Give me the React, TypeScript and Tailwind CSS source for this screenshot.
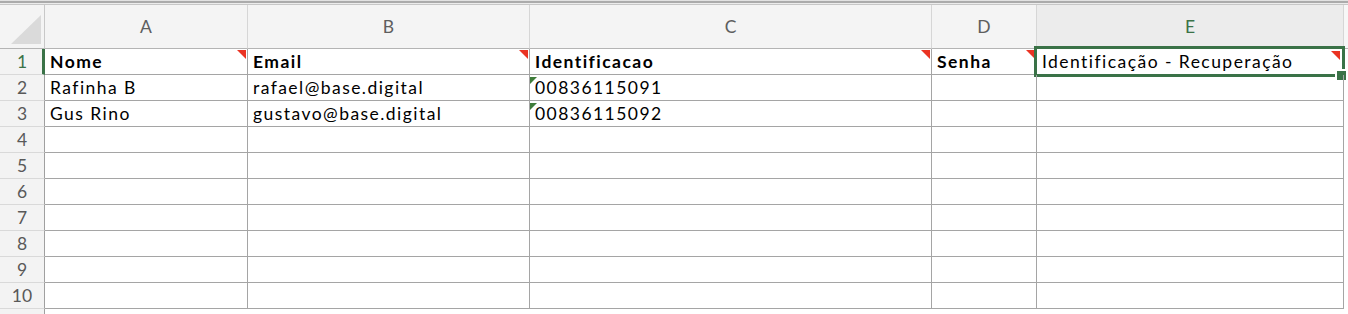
import type { ReactNode } from 'react';

type CellData = {
  text?: string;
  bold?: boolean;
  note?: boolean;
  warn?: boolean;
};

const rows: CellData[][] = [
  [
    { text: 'Nome', bold: true, note: true },
    { text: 'Email', bold: true, note: true },
    { text: 'Identificacao', bold: true, note: true },
    { text: 'Senha', bold: true, note: true },
    { text: 'Identificação - Recuperação', note: true },
  ],
  [{ text: 'Rafinha B' }, { text: 'rafael@base.digital' }, { text: '00836115091', warn: true }, {}, {}],
  [{ text: 'Gus Rino' }, { text: 'gustavo@base.digital' }, { text: '00836115092', warn: true }, {}, {}],
];

const columns = ['A', 'B', 'C', 'D', 'E'];

const RedCorner = ({ inset = 'top-px right-px' }: { inset?: string }) => (
  <svg className={`absolute ${inset} w-[9px] h-[9px]`} viewBox="0 0 9 9">
    <polygon points="0,0 9,0 9,9" fill="#ea3323" />
  </svg>
);

const GreenCorner = () => (
  <svg className="absolute top-[2px] left-0 w-[7px] h-[7px]" viewBox="0 0 7 7">
    <polygon points="0,0 7,0 0,7" fill="#3f7d3a" />
  </svg>
);

const BodyCell = ({ cell, selected }: { cell?: CellData; selected?: boolean }) => (
  <div className="relative h-[26px] border-r border-b border-[#a5a5a5] flex items-center pl-[5px] pt-px whitespace-nowrap text-[17.5px] tracking-[1.45px] leading-none">
    {cell?.warn && <GreenCorner />}
    <span className={cell?.bold ? 'font-bold' : ''}>{cell?.text}</span>
    {selected && (
      <>
        <div className="absolute -left-[3px] -top-[3px] -right-[2px] -bottom-[3px] border-[3px] border-[#3a7247]" />
        <div className="absolute left-[298px] top-[20px] w-[11px] h-[11px] bg-[#3a7247] border-l-2 border-t-2 border-white" />
      </>
    )}
    {cell?.note && <RedCorner inset={selected ? 'top-[2px] right-[3px]' : 'top-px right-px'} />}
  </div>
);

const RowHead = ({ n, active }: { n: number; active?: boolean }) => (
  <div
    className={`h-[26px] border-b border-[#d9d9d9] flex items-center justify-center pt-px bg-[#f3f3f3] text-[17.5px] leading-none ${
      active ? 'border-r-[3px] border-r-[#3a7247] text-[#3a7247] pl-[2px]' : 'border-r border-r-[#a0a0a0] text-[#595959]'
    }`}
  >
    {n}
  </div>
);

const HeadCell = ({ children, active }: { children: ReactNode; active?: boolean }) => (
  <div
    className={`h-[44px] border-r border-b border-r-[#d6d6d6] border-b-[#b4b4b4] flex items-center justify-center pt-[2px] text-[17.5px] ${
      active ? 'bg-[#ececec] text-[#3a7247]' : 'bg-[#f4f4f4] text-[#5e5e5e]'
    }`}
  >
    {children}
  </div>
);

export default function App() {
  return (
    <div className="w-[1348px] h-[314px] overflow-hidden bg-white text-black font-['Lato','Liberation_Sans',sans-serif]">
      <div className="h-px bg-[#e2e2e2]" />
      <div className="h-[2px] bg-[#ababab]" />
      <div className="h-px bg-[#ececec]" />
      <div className="h-px bg-[#c7c7c7]" />
      <div className="grid grid-cols-[45px_203px_282px_402px_105px_307px_1fr]">
        <div className="h-[44px] border-r border-b border-r-[#c8c8c8] border-b-[#b4b4b4] bg-[#f4f4f4] flex items-end justify-end pr-[3px] pb-[4px]">
          <svg className="w-[30px] h-[29px]" viewBox="0 0 30 29">
            <polygon points="0,29 30,0 30,29" fill="#dadada" />
          </svg>
        </div>
        {columns.map((c) => (
          <HeadCell key={c} active={c === 'E'}>
            {c}
          </HeadCell>
        ))}
        <div className="h-[44px] border-b border-b-[#b4b4b4] bg-[#f7f7f7]" />

        {Array.from({ length: 10 }, (_, r) => (
          <div key={r} className="contents">
            <RowHead n={r + 1} active={r === 0} />
            {columns.map((c, ci) => (
              <BodyCell key={c} cell={rows[r]?.[ci]} selected={r === 0 && c === 'E'} />
            ))}
            <div className="h-[26px]" />
          </div>
        ))}
        <div className="h-[10px] bg-[#f3f3f3] border-r border-r-[#a0a0a0]" />
      </div>
    </div>
  );
}
